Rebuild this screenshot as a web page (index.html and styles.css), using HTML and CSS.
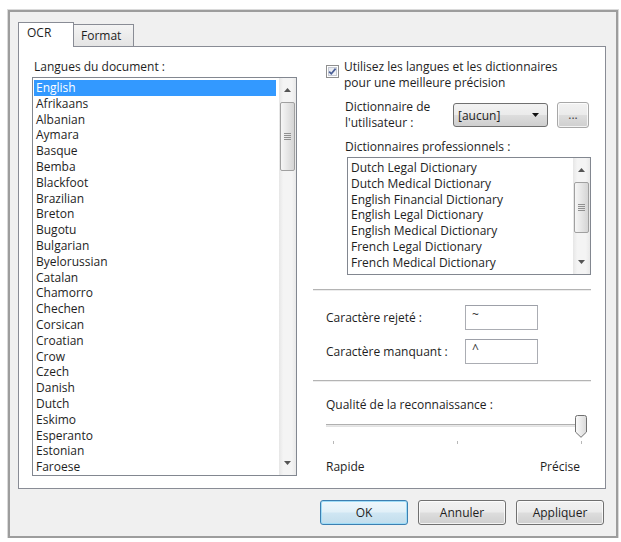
FILE: index.html
```html
<!DOCTYPE html>
<html lang="fr">
<head>
<meta charset="utf-8">
<title>OCR</title>
<link rel="stylesheet" href="styles.css">
</head>
<body>
<div class="window">
  <div class="tabs">
    <div class="tab active">OCR</div>
    <div class="tab">Format</div>
  </div>
  <div class="panel">
    <div class="col-left">
      <div class="label lang-label">Langues du document :</div>
      <div class="listbox lang-list">
        <ul class="items">
          <li class="sel">English</li>
          <li>Afrikaans</li>
          <li>Albanian</li>
          <li>Aymara</li>
          <li>Basque</li>
          <li>Bemba</li>
          <li>Blackfoot</li>
          <li>Brazilian</li>
          <li>Breton</li>
          <li>Bugotu</li>
          <li>Bulgarian</li>
          <li>Byelorussian</li>
          <li>Catalan</li>
          <li>Chamorro</li>
          <li>Chechen</li>
          <li>Corsican</li>
          <li>Croatian</li>
          <li>Crow</li>
          <li>Czech</li>
          <li>Danish</li>
          <li>Dutch</li>
          <li>Eskimo</li>
          <li>Esperanto</li>
          <li>Estonian</li>
          <li>Faroese</li>
        </ul>
        <div class="vscroll">
          <div class="arrow"><svg width="7" height="4" viewBox="0 0 7 4"><path d="M0 4 L3.5 0 L7 4 Z" fill="#555"/></svg></div>
          <div class="track"><div class="thumb thumb-lang"></div></div>
          <div class="arrow"><svg width="7" height="4" viewBox="0 0 7 4"><path d="M0 0 L7 0 L3.5 4 Z" fill="#555"/></svg></div>
        </div>
      </div>
    </div>
    <div class="col-right">
      <div class="chk-row">
        <span class="checkbox"><svg width="13" height="13" viewBox="0 0 13 13"><defs><linearGradient id="cb" x1="0" y1="0" x2="1" y2="1"><stop offset="0" stop-color="#e4e7ee"/><stop offset="1" stop-color="#f7f8fb"/></linearGradient></defs><rect x="0.5" y="0.5" width="12" height="12" fill="#fff" stroke="#8f8f8f"/><rect x="2.5" y="2.5" width="8" height="8" fill="url(#cb)" stroke="#c6cad3"/><path d="M3.2 6.6 L5.3 8.8 L9.6 3.6" fill="none" stroke="#4a5f97" stroke-width="1.7"/></svg></span>
        <span class="chk-text"><span class="chk-line">Utilisez les langues et les dictionnaires</span><span class="chk-line">pour une meilleure précision</span></span>
      </div>
      <div class="dict-row">
        <span class="dict-label">Dictionnaire de<br>l'utilisateur :</span>
        <div class="combo"><span>[aucun]</span><svg width="7" height="4" viewBox="0 0 7 4"><path d="M0 0 L7 0 L3.5 4 Z" fill="#111"/></svg></div>
        <div class="btn dots">...</div>
      </div>
      <div class="label pro-label">Dictionnaires professionnels :</div>
      <div class="listbox pro-list">
        <ul class="items">
          <li>Dutch Legal Dictionary</li>
          <li>Dutch Medical Dictionary</li>
          <li>English Financial Dictionary</li>
          <li>English Legal Dictionary</li>
          <li>English Medical Dictionary</li>
          <li>French Legal Dictionary</li>
          <li>French Medical Dictionary</li>
        </ul>
        <div class="vscroll">
          <div class="arrow"><svg width="7" height="4" viewBox="0 0 7 4"><path d="M0 4 L3.5 0 L7 4 Z" fill="#555"/></svg></div>
          <div class="track"><div class="thumb thumb-pro"></div></div>
          <div class="arrow"><svg width="7" height="4" viewBox="0 0 7 4"><path d="M0 0 L7 0 L3.5 4 Z" fill="#555"/></svg></div>
        </div>
      </div>
      <div class="sep sep-1"></div>
      <div class="field-row first">
        <span class="field-label">Caractère rejeté :</span>
        <div class="field">~</div>
      </div>
      <div class="field-row">
        <span class="field-label">Caractère manquant :</span>
        <div class="field">^</div>
      </div>
      <div class="sep sep-2"></div>
      <div class="label quality-label">Qualité de la reconnaissance :</div>
      <div class="slider">
        <div class="slider-track"></div>
        <svg class="slider-thumb" width="12" height="23" viewBox="0 0 12 23"><defs><linearGradient id="th" x1="0" y1="0" x2="1" y2="0"><stop offset="0" stop-color="#fbfbfb"/><stop offset="1" stop-color="#d9d9d9"/></linearGradient></defs><path d="M0.5 2.5 Q0.5 0.5 2.5 0.5 L9.5 0.5 Q11.5 0.5 11.5 2.5 L11.5 17 L6 22.3 L0.5 17 Z" fill="url(#th)" stroke="#707070"/></svg>
      </div>
      <div class="ticks"><span></span><span></span><span></span></div>
      <div class="range-labels"><span>Rapide</span><span>Précise</span></div>
    </div>
  </div>
  <div class="buttons">
    <div class="btn default">OK</div>
    <div class="btn">Annuler</div>
    <div class="btn">Appliquer</div>
  </div>
</div>
</body>
</html>
```
FILE: styles.css
```css
* { box-sizing: border-box; }
html, body { margin: 0; padding: 0; background: #fff; }
body {
  font-family: "Open Sans", "Noto Sans", sans-serif;
  font-size: 12px;
  color: #1e1e1e;
}

.window {
  margin: 10px 0 0 8px;
  width: 610px;
  height: 528px;
  border: 2px solid #9d9d9d;
  box-shadow: 0 0 0 1px #dadada;
  background: #f0f0f0;
  padding: 10px 10px 0 8px;
  display: flex;
  flex-direction: column;
}

/* tabs */
.tabs {
  display: flex;
  align-items: flex-end;
  height: 24px;
  position: relative;
  z-index: 1;
}
.tab {
  width: 61px;
  height: 22px;
  margin-left: -1px;
  padding: 3px 0 0 7px;
  line-height: 16px;
  border: 1px solid #898c95;
  border-bottom: none;
  background: linear-gradient(#f4f4f4, #e4e4e4);
}
.tab.active {
  width: 56px;
  height: 25px;
  margin-left: 0;
  margin-bottom: -1px;
  padding: 2px 0 0 8px;
  background: #fff;
}

/* panel */
.panel {
  height: 443px;
  background: #fff;
  border: 1px solid #898c95;
  padding: 12px 14px 12px 13px;
  display: grid;
  grid-template-columns: 265px 278px;
  column-gap: 16px;
  align-content: start;
}
.col-left, .col-right { display: flex; flex-direction: column; }

.label { line-height: 16px; white-space: nowrap; }
.lang-label { padding-left: 2px; }

/* listbox */
.listbox {
  border: 1px solid #828790;
  background: #fff;
  display: flex;
  overflow: hidden;
}
.lang-list { margin-top: 2px; height: 399px; }
.items {
  flex: 1;
  list-style: none;
  margin: 0;
  padding: 2px 3px 0 1px;
  overflow: hidden;
}
.items li {
  height: 15.8px;
  line-height: 15.8px;
  padding-left: 2px;
  white-space: nowrap;
}
.items li.sel { background: #3399ff; color: #fff; }

.vscroll {
  width: 17px;
  display: flex;
  flex-direction: column;
  background: linear-gradient(to right, #e6e6e6, #f4f4f4 25%, #f4f4f4 75%, #e9e9e9);
}
.arrow {
  height: 24px;
  flex: none;
  display: flex;
  align-items: center;
  justify-content: center;
}
.track { flex: 1; padding: 0 1px; }
.thumb {
  border: 1px solid #a0a0a0;
  border-radius: 2px;
  background: linear-gradient(to right, #f6f6f6, #e4e4e4 55%, #d5d5d5);
  display: flex;
  align-items: center;
  justify-content: center;
}
.thumb::after {
  content: "";
  width: 7px;
  height: 7px;
  background: repeating-linear-gradient(#909090 0 1px, transparent 1px 2px);
}
.thumb-lang { height: 69px; }
.thumb-pro { height: 51px; }

/* right column */
.chk-row {
  padding-left: 13px;
  display: flex;
  align-items: flex-start;
}
.checkbox { display: flex; margin-top: 6px; }
.chk-text { margin-left: 5px; display: flex; flex-direction: column; }
.chk-line { height: 16px; line-height: 16px; white-space: nowrap; }

.dict-row {
  margin-top: 8px;
  padding-left: 32px;
  display: flex;
  align-items: flex-start;
}
.dict-label { width: 108px; line-height: 16px; }
.combo {
  width: 95px;
  height: 24px;
  margin-top: 4px;
  padding: 0 8px 0 4px;
  border: 1px solid #707070;
  border-radius: 3px;
  background: linear-gradient(#f2f2f2 0%, #ebebeb 48%, #dddddd 52%, #cfcfcf 100%);
  display: flex;
  align-items: center;
  justify-content: space-between;
}

.btn {
  height: 25px;
  width: 88px;
  border: 1px solid #707070;
  border-radius: 3px;
  background: linear-gradient(#f2f2f2 0%, #ebebeb 48%, #dddddd 52%, #cfcfcf 100%);
  box-shadow: inset 0 0 0 1px rgba(255, 255, 255, 0.75);
  display: flex;
  align-items: center;
  justify-content: center;
}
.btn.dots {
  width: 32px;
  height: 26px;
  margin-left: 9px;
  margin-top: 3px;
  padding-bottom: 2px;
  border-color: #a8a8a8;
  color: #444;
}
.btn.default {
  border-color: #3c7fb1;
  box-shadow: inset 0 0 0 1px #9fdcf7;
  background: linear-gradient(#eef7fc 0%, #e1f0f8 48%, #cfe6f3 52%, #c2ddec 100%);
}

.pro-label { margin-top: 8px; padding-left: 32px; }
.pro-list { margin-top: 2px; margin-left: 34px; height: 118px; }

.sep {
  height: 2px;
  border-top: 1px solid #b4b4b4;
  border-bottom: 1px solid #ececec;
}
.sep-1 { margin-top: 14px; }
.sep-2 { margin-top: 16px; }

.field-row {
  margin-top: 9px;
  padding-left: 13px;
  display: flex;
  align-items: center;
  height: 25px;
}
.field-row.first { margin-top: 14px; }
.field-label { width: 139px; }
.field {
  width: 73px;
  height: 25px;
  border: 1px solid #abadb3;
  border-top-color: #9da0a8;
  background: #fff;
  padding: 1px 0 0 6px;
  line-height: 16px;
  color: #333;
}

.quality-label { margin-top: 15px; padding-left: 13px; }

.slider {
  margin-left: 13px;
  width: 261px;
  height: 27px;
  display: grid;
}
.slider-track {
  grid-area: 1 / 1;
  align-self: center;
  margin-right: 4px;
  height: 3px;
  margin-top: -2px;
  border-top: 1px solid #b0b0b0;
  border-bottom: 1px solid #e2e2e2;
  background: #e8e8e8;
}
.slider-thumb {
  grid-area: 1 / 1;
  justify-self: end;
  align-self: center;
}

.ticks {
  margin-top: 1px;
  height: 3px;
  padding: 0 9px 0 20px;
  display: flex;
  justify-content: space-between;
}
.ticks span { width: 1px; height: 3px; background: #b8b8b8; }

.range-labels {
  margin-top: 15px;
  padding: 0 11px 0 13px;
  line-height: 16px;
  display: flex;
  justify-content: space-between;
}

/* buttons */
.buttons {
  margin-top: 11px;
  padding-right: 2px;
  display: flex;
  justify-content: flex-end;
  gap: 10px;
}
```
